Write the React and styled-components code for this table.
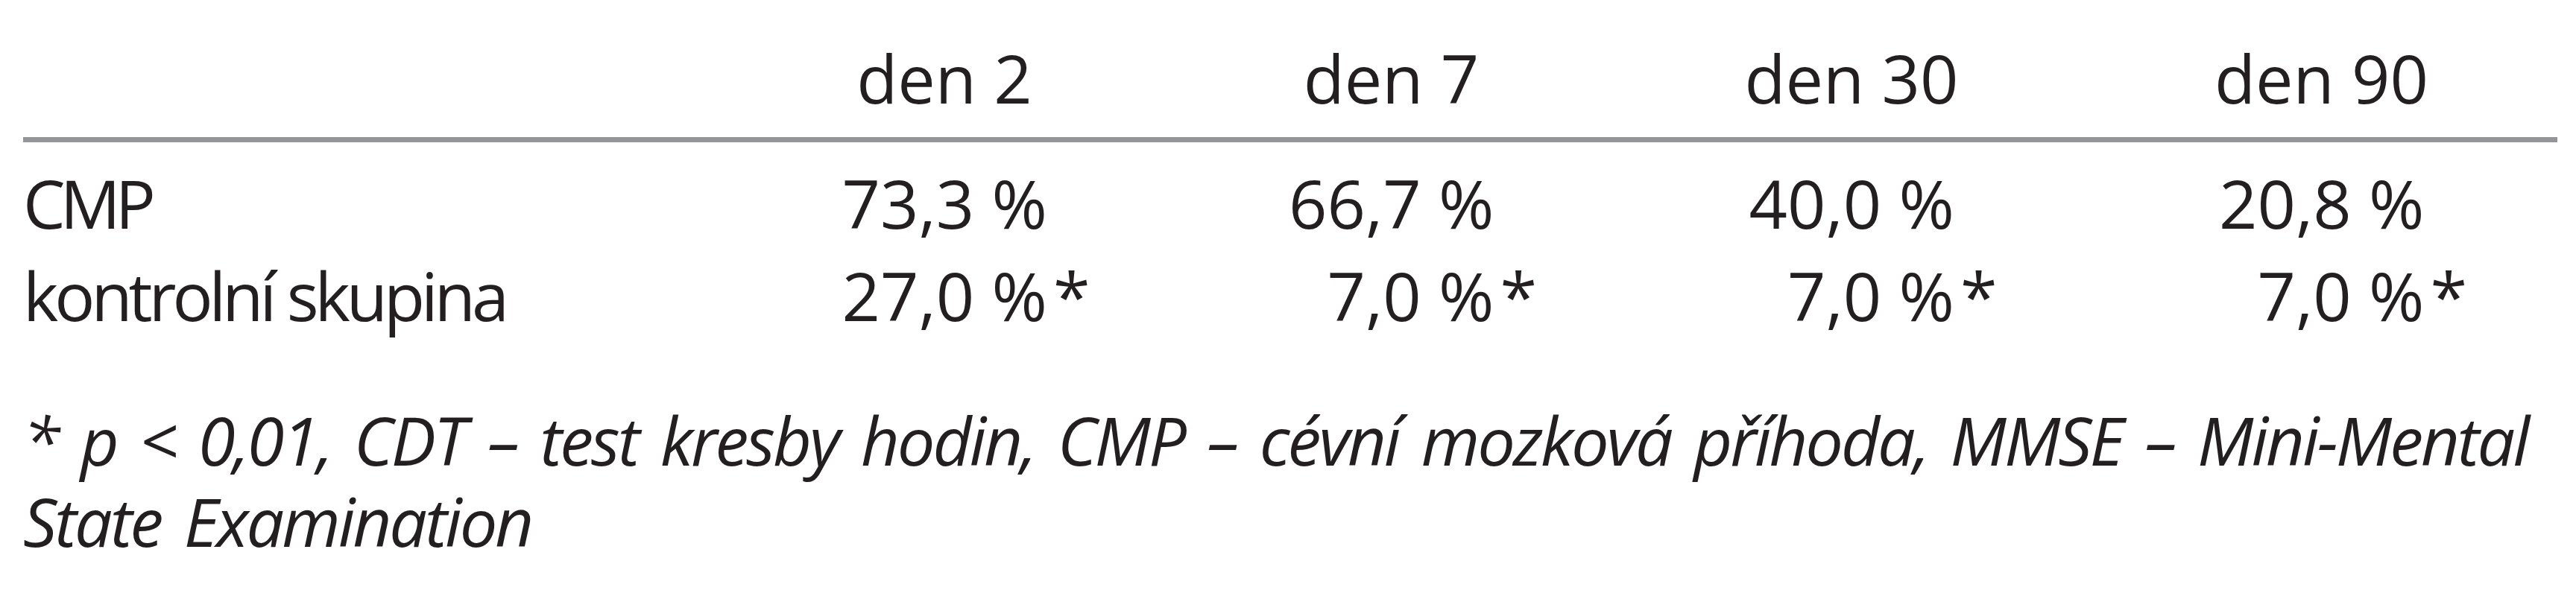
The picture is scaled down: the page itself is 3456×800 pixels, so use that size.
import React from 'react';
import styled, { createGlobalStyle } from 'styled-components';

const Global = createGlobalStyle`
    html, body {
        margin: 0;
        background: #ffffff;
    }
    body {
        font-family: 'Open Sans', 'Noto Sans', sans-serif;
        color: #231f20;
    }
`;

const Page = styled.div`
    padding: 42px 25px 0 31px;
`;

const Table = styled.div`
    display: grid;
    grid-template-columns: 940px 592px 607px 628px 633px;
    font-size: 90px;
    line-height: 124px;
`;

const HeadCell = styled.div`
    text-align: center;
    white-space: nowrap;
`;

const Rule = styled.div`
    grid-column: 1 / -1;
    height: 7px;
    margin: 18px 0 19px;
    background: #939598;
`;

const Label = styled.div`
    white-space: nowrap;
    letter-spacing: ${p => p.$spacing}px;
`;

const ValueCell = styled.div`
    display: flex;
    justify-content: center;
    white-space: nowrap;
`;

const Ghost = styled.span`
    width: ${p => p.$w}px;
`;

const Num = styled.span`
    width: 276px;
    text-align: right;
`;

const Star = styled.span`
    width: ${p => p.$w}px;
    padding-left: 8px;
    box-sizing: border-box;
`;

const Note = styled.p`
    margin: 78px 0 0;
    font-size: 90px;
    line-height: 109px;
    font-style: italic;
    letter-spacing: -3px;
    word-spacing: 10px;
    white-space: nowrap;
`;

const days = ['den 2', 'den 7', 'den 30', 'den 90'];

const rows = [
    { label: 'CMP', spacing: -7, values: ['73,3 %', '66,7 %', '40,0 %', '20,8 %'], star: false },
    { label: 'kontrolní skupina', spacing: -5, values: ['27,0 %', '7,0 %', '7,0 %', '7,0 %'], star: true },
];

const STAR_W = 52;

const App = () => {
    return (
        <Page>
            <Global />
            <Table>
                <div />
                {days.map(d => <HeadCell key={d}>{d}</HeadCell>)}
                <Rule />
                {rows.map(r => (
                    <React.Fragment key={r.label}>
                        <Label $spacing={r.spacing}>{r.label}</Label>
                        {r.values.map((v, i) => (
                            <ValueCell key={i}>
                                <Ghost $w={STAR_W} />
                                <Num>{v}</Num>
                                <Star $w={STAR_W}>{r.star ? '*' : ''}</Star>
                            </ValueCell>
                        ))}
                    </React.Fragment>
                ))}
            </Table>
            <Note>
                * p &lt; 0,01, CDT – test kresby hodin, CMP – cévní mozková příhoda, MMSE – Mini-Mental<br />
                State Examination
            </Note>
        </Page>
    );
};

export default App;
